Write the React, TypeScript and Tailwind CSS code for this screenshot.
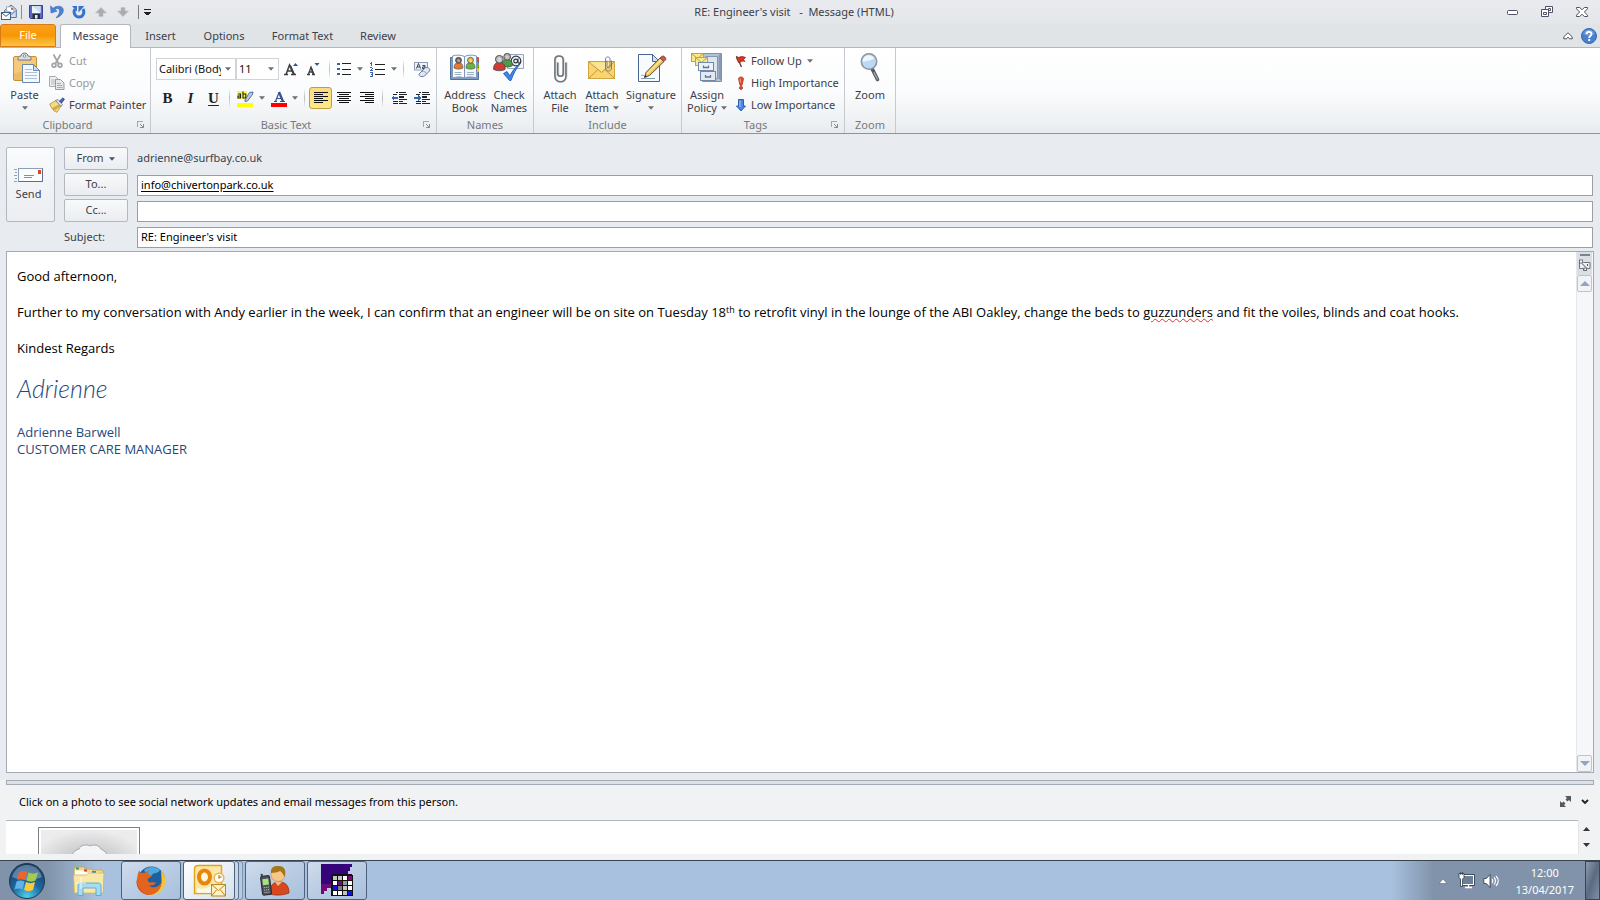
import React from "react";

type Kids = { children?: React.ReactNode };

/* ---------- small glyphs ---------- */

function Caret({ color = "#6b6f76" }: { color?: string }) {
  return (
    <svg width="6" height="4" viewBox="0 0 6 4" className="shrink-0" aria-hidden="true">
      <path d="M0 .3h6L3 3.700z" fill={color} />
    </svg>
  );
}

function Launcher({ label }: { label: string }) {
  return (
    <button type="button" aria-label={label} className="flex h-3 w-3 items-center justify-center">
      <svg width="8" height="8" viewBox="0 0 8 8" shapeRendering="crispEdges">
        <path d="M0 6V0h6v1H1v5z" fill="#a3a7ad" />
        <path d="M3 3h1v1h1v1h1V3h1v4H3V6h2V5H4V4H3z" fill="#8a8e94" />
      </svg>
    </button>
  );
}

function Sep() {
  return <span className="mx-1 h-5 w-px shrink-0 bg-gradient-to-b from-transparent via-[#b9bdc4] to-transparent" />;
}

/* ---------- title bar ---------- */

function EnvelopeLogo() {
  return (
    <svg width="17" height="17" viewBox="0 0 17 17">
      <path d="M4.500 6.500L11 1l5.300 4.500v8H4.500z" fill="#cfe0f2" stroke="#53779f" />
      <path d="M6.500 7V2.800h7.300V9z" fill="#fff" stroke="#7e9cbd" strokeWidth=".8" />
      <rect x="11" y="3.800" width="2" height="2" fill="#d9542c" />
      <path d="M5 7.500l5.500 3.800 5.500-4.800" fill="none" stroke="#6f93b8" />
      <rect x="1.500" y="8.500" width="9" height="7" fill="#f7fafd" stroke="#45617f" />
      <path d="M1.500 8.700L6 12.300l4.500-3.600" fill="none" stroke="#45617f" />
    </svg>
  );
}

function SaveIcon() {
  return (
    <svg width="14" height="14" viewBox="0 0 14 14">
      <path d="M.5.5h13v13h-12l-1-1z" fill="#5a68cf" stroke="#3641a0" />
      <rect x="3" y="1" width="8.500" height="7" fill="#eef4fd" />
      <path d="M3 1h8.500v7z" fill="#c9dcf5" />
      <rect x="3.500" y="9" width="7.500" height="5" fill="#2c3038" />
      <rect x="6" y="10" width="2.500" height="3.500" fill="#e9edf3" />
    </svg>
  );
}

function UndoIcon() {
  return (
    <svg width="14" height="14" viewBox="0 0 14 14">
      <path d="M.5 1l.6 7 6-2L5 5c1.500-2.600 4.800-2 4.600 1.500-.2 2.300-1.600 4.300-3.600 6.300 4-1 7.300-4 7.300-7.600C13.300.8 7 0 3 3.300z" fill="#4a83d8" stroke="#2f62b4" strokeWidth=".6" />
    </svg>
  );
}

function RedoIcon() {
  return (
    <svg width="14" height="14" viewBox="0 0 14 14">
      <path d="M2.800 4.200C1 7.500 3 12 7 12s6-4.500 4-8" fill="none" stroke="#3472d0" strokeWidth="3" />
      <path d="M0 1h5v5.500L3.500 5z" fill="#3472d0" />
      <path d="M6.500 7.500V1h5.800z" fill="#3472d0" />
    </svg>
  );
}

function NavArrow({ down = false }: { down?: boolean }) {
  return (
    <svg width="12" height="10" viewBox="0 0 12 10">
      <path d={down ? "M4 .5h4V4h3.500L6 9.500.5 4H4z" : "M4 9.500h4V6h3.500L6 .5.5 6H4z"} fill="#a9abaf" stroke="#bfc1c5" strokeWidth=".6" />
    </svg>
  );
}

function TitleBar() {
  return (
    <header className="flex h-6 items-center bg-gradient-to-b from-[#e9eaee] to-[#e4e7ea]">
      <div className="flex flex-1 items-center">
        <EnvelopeLogo />
        <span className="ml-1 mr-0.5 h-3.5 w-px bg-[#8b8e93]" />
        <button type="button" aria-label="Save" className="ml-0.5 flex w-5 justify-center"><SaveIcon /></button>
        <button type="button" aria-label="Undo" className="flex w-[22px] justify-center"><UndoIcon /></button>
        <button type="button" aria-label="Repeat" className="flex w-[22px] justify-center"><RedoIcon /></button>
        <button type="button" aria-label="Previous item" className="flex w-[22px] justify-center"><NavArrow /></button>
        <button type="button" aria-label="Next item" className="flex w-[22px] justify-center"><NavArrow down /></button>
        <span className="ml-1 mr-1 h-3.5 w-px bg-[#77797d]" />
        <button type="button" aria-label="Customize toolbar" className="flex w-2 justify-center">
          <svg width="7" height="6" viewBox="0 0 7 6" shapeRendering="crispEdges">
            <path d="M0 0h7v1H0zM0 3h7v1H6v1H5v1H2V5H1V4H0z" fill="#222" />
          </svg>
        </button>
      </div>
      <h1 className="whitespace-pre text-[11px] leading-4 text-[#3c4048]">{"RE: Engineer's visit   -  Message (HTML)"}</h1>
      <div className="flex flex-1 items-center justify-end gap-[22px] pr-3">
        <button type="button" aria-label="Minimize">
          <svg width="12" height="12" viewBox="0 0 12 12"><rect x=".5" y="4.500" width="10" height="4" rx="1" fill="#fff" stroke="#4e5166" /></svg>
        </button>
        <button type="button" aria-label="Restore">
          <svg width="13" height="12" viewBox="0 0 13 12">
            <path d="M4.500.5h7v6h-7z" fill="#fff" stroke="#4e5166" />
            <path d="M7.500 2.500h2v2h-2z" fill="none" stroke="#4e5166" />
            <path d="M.5 3.500h7v7h-7z" fill="#fff" stroke="#4e5166" />
            <path d="M2.500 6.500h3v2h-3z" fill="none" stroke="#4e5166" />
          </svg>
        </button>
        <button type="button" aria-label="Close">
          <svg width="12" height="10" viewBox="0 0 12 10">
            <path d="M.5.5h3.200L6 2.800 8.300.5h3.200v1.300L8.300 5l3.200 3.200v1.300H8.300L6 7.200 3.700 9.500H.5V8.200L3.700 5 .5 1.800z" fill="#fff" stroke="#4e5166" />
          </svg>
        </button>
      </div>
    </header>
  );
}

function TabStrip() {
  const tab = "flex h-6 items-center justify-center";
  return (
    <nav className="flex h-6 items-stretch border-b border-[#b3b7bd] bg-[#e0e4e7] text-[11px] text-[#3c4048]">
      <button type="button" className="flex w-14 items-center justify-center rounded-t-[3px] border border-[#d97a17] bg-gradient-to-b from-[#f9a01c] via-[#f79700] to-[#fdc63f] text-white">File</button>
      <button type="button" className={tab + " relative ml-1 w-[71px] rounded-t-[3px] border border-b-0 border-[#b3b7bd] bg-white"}>Message</button>
      <button type="button" className={tab + " w-[59px]"}>Insert</button>
      <button type="button" className={tab + " w-[68px]"}>Options</button>
      <button type="button" className={tab + " w-[89px]"}>Format Text</button>
      <button type="button" className={tab + " w-[62px]"}>Review</button>
      <div className="flex flex-1 items-center justify-end gap-2 pr-[3px]">
        <button type="button" aria-label="Collapse the ribbon">
          <svg width="10" height="8" viewBox="0 0 10 8">
            <path d="M5 .8l4.200 4v2H6.700L5 5.200 3.300 6.800H.8v-2z" fill="#fff" stroke="#4e5166" />
          </svg>
        </button>
        <button type="button" aria-label="Help">
          <svg width="16" height="16" viewBox="0 0 16 16">
            <circle cx="8" cy="8" r="7.500" fill="#4a80d0" stroke="#3566b0" />
            <path d="M2 6a6.300 6.300 0 0 1 12 0c-4 2-8 2-12 0z" fill="#7ba5e2" opacity=".6" />
            <path d="M5.500 6.300C5.500 2.800 10.500 3 10.500 6c0 1.800-2.300 1.800-2.300 3.900" fill="none" stroke="#fff" strokeWidth="1.900" />
            <rect x="7.200" y="11" width="2" height="2" fill="#fff" />
          </svg>
        </button>
      </div>
    </nav>
  );
}

/* ---------- ribbon icons ---------- */

function PasteIcon() {
  return (
    <svg width="32" height="32" viewBox="0 0 32 32">
      <rect x="4.500" y="4.500" width="23" height="24" rx="1.500" fill="#eebb62" stroke="#c98f35" />
      <path d="M5 5h22v8L5 22z" fill="#f6cf86" opacity=".7" />
      <path d="M9 6.500c0-1.500 1-2.500 3-2.500 0-1.500 1-3 3.500-3S19 2.500 19 4c2 0 3 1 3 2.500V8H9z" fill="#d8dde3" stroke="#6f7884" />
      <circle cx="15.500" cy="4" r="1.300" fill="#fff" stroke="#6f7884" strokeWidth=".8" />
      <path d="M13.500 12.500h11l6 6v12h-17z" fill="#f5f9fe" stroke="#6b87b3" />
      <path d="M24.500 12.500v6h6z" fill="#cfdff2" stroke="#6b87b3" />
      <path d="M16 17.500h7M16 20.500h12M16 23.500h12M16 26.500h12" stroke="#a9bfdc" />
    </svg>
  );
}

function CutIcon() {
  return (
    <svg width="16" height="16" viewBox="0 0 16 16" fill="none" stroke="#a0a3a7" strokeWidth="1.700">
      <path d="M4.500 1.500l5 9M11.500 1.500l-5 9" />
      <circle cx="5" cy="12.300" r="1.900" />
      <circle cx="11" cy="12.300" r="1.900" />
    </svg>
  );
}

function CopyIcon() {
  return (
    <svg width="16" height="16" viewBox="0 0 16 16">
      <path d="M.5 1.500h6l3 3v7h-9z" fill="#f0f0f1" stroke="#a7a9ac" />
      <path d="M2 5h5M2 7h4M2 9h4" stroke="#b5b7ba" />
      <path d="M6.500 4.500h5l3.500 3.500v6.500H6.500z" fill="#e6e7e8" stroke="#999ca0" />
      <path d="M8 8.500h4M8 10.500h5.500M8 12.500h5.500" stroke="#aaacaf" />
    </svg>
  );
}

function PainterIcon() {
  return (
    <svg width="16" height="16" viewBox="0 0 16 16">
      <path d="M.8 7L7 3.500l5 5.500-4 6.300C4.500 14 2 11 .8 7z" fill="#f2dd84" stroke="#b8922e" strokeWidth=".8" />
      <path d="M5 14l7-5-1-2-8 4z" fill="#b98b2d" opacity=".6" />
      <path d="M6.500 3.500L9 2.500l4.500 5-1.500 2z" fill="#dfe3ea" stroke="#6c7380" strokeWidth=".8" />
      <path d="M10.500 4L14 .8l1.500 1.500L12.500 6z" fill="#4766b4" stroke="#2c4486" strokeWidth=".8" />
    </svg>
  );
}

function GrowFont({ shrink = false }: { shrink?: boolean }) {
  return (
    <svg width="18" height="18" viewBox="0 0 18 18">
      {shrink ? (
        <>
          <path d="M2 14.500h3M7 14.500h3M3.300 14.500L6 7l3 7.500M4.300 12h3.500" fill="none" stroke="#3c3f44" strokeWidth="1.300" />
          <path d="M6 7.500l2.500 7" stroke="#3c3f44" strokeWidth="1.600" />
          <path d="M9.500 3h5L12 6z" fill="#2f5496" />
        </>
      ) : (
        <>
          <path d="M2 14.500h4M9 14.500h5M4 14.500L7.500 5l4.500 9.500M5 11h5.500" fill="none" stroke="#3c3f44" strokeWidth="1.500" />
          <path d="M8 5.500l4 9" stroke="#3c3f44" strokeWidth="2" />
          <path d="M11 6h5l-2.500-3z" fill="#2f5496" />
        </>
      )}
    </svg>
  );
}

function BulletsIcon() {
  return (
    <svg width="14" height="14" viewBox="0 0 14 14" shapeRendering="crispEdges">
      <path d="M0 1h3v2H0zM0 6h3v2H0zM0 11h3v2H0z" fill="#3c62a8" />
      <path d="M5 1h9v1H5zM5 7h9v1H5zM5 12h9v1H5z" fill="#222" />
    </svg>
  );
}

function NumbersIcon() {
  return (
    <svg width="15" height="15" viewBox="0 0 15 15" shapeRendering="crispEdges">
      <path d="M1 0h1v4H1zM0 1h1v1H0zM0 5h2v1h1v1H2v1h1v1H0V8h1V7h1V6H0zM0 10h3v5H0v-1h2v-1H1v-1h1v-1H0z" fill="#3c62a8" />
      <path d="M5 2h10v1H5zM5 7h10v1H5zM5 12h10v1H5z" fill="#222" />
    </svg>
  );
}

function ClearFormatIcon() {
  return (
    <svg width="17" height="17" viewBox="0 0 17 17">
      <rect x=".5" y="1.500" width="13" height="7.500" fill="#eef3fa" stroke="#8f9bb0" />
      <path d="M2.500 7.500l2-5 2 5M3.200 6h2.600M8.500 4.500h2.500v3H8.500V6H11" fill="none" stroke="#38425a" />
      <path d="M5 13l6-6c2-1.500 6 .5 4.500 3L10.500 15c-2 1.500-6.500 0-5.500-2z" fill="#dfe7f2" stroke="#6b7f9f" />
      <path d="M8 10.500c2-.5 4 .5 4.500 2.500" fill="none" stroke="#8da0bd" />
    </svg>
  );
}

function HighlightIcon() {
  return (
    <svg width="17" height="17" viewBox="0 0 17 17">
      <rect x="0" y="1" width="10" height="8" fill="#fbf34e" />
      <path d="M1 4h2.500v4H1V6h2.500M6 1.500V8h2.800V4H6" fill="none" stroke="#222" strokeWidth="1.100" />
      <path d="M8 10l4.500-7.500L16 2l-.5 2.500L10.500 11 8 11.500z" fill="#b8cbe6" stroke="#44618f" strokeWidth=".9" />
      <rect x="0" y="13" width="16" height="4" fill="#ffff00" />
    </svg>
  );
}

function FontColorIcon() {
  return (
    <svg width="16" height="17" viewBox="0 0 16 17">
      <path d="M3 11.500h3M9 11.500h5M4.500 11.500L8 2.500M5.500 8.500H10" fill="none" stroke="#33548f" strokeWidth="1.200" />
      <path d="M8 2l4 9.500" stroke="#33548f" strokeWidth="2.300" />
      <rect x="0" y="13" width="16" height="4" fill="#ff0000" />
    </svg>
  );
}

function AlignIcon({ kind }: { kind: "left" | "center" | "right" }) {
  return (
    <svg width="14" height="12" viewBox="0 0 14 12" shapeRendering="crispEdges">
      {[14, 9, 14, 9, 14, 9].map((w, i) => (
        <rect key={i} x={kind === "left" ? 0 : kind === "right" ? 14 - w : w === 9 ? 2 : 0} y={i * 2} width={kind === "center" && w === 9 ? 10 : w} height="1" fill="#111" />
      ))}
    </svg>
  );
}

function IndentIcon({ out = false }: { out?: boolean }) {
  return (
    <svg width="16" height="13" viewBox="0 0 16 13" shapeRendering="crispEdges">
      <path d="M5 0h2v1H5zM8 0h7v1H8zM8 2h8v1H8zM8 4h5v2H8zM8 7h8v1H8zM8 9h4v1H8zM2 11h5v1H2zM8 11h8v1H8zM2 2h4v1H2zM2 9h5v1H2z" fill="#222" />
      <path d={out ? "M0 6l3-3v2h4v2H3v2z" : "M7 6L4 3v2H0v2h4v2z"} fill="#3467b8" />
    </svg>
  );
}

function Bust({ x, y, head, body, size = 1 }: { x: number; y: number; head: string; body: string; size?: number }) {
  return (
    <g transform={`translate(${x} ${y}) scale(${size})`}>
      <path d="M0 11c0-4 2-5.500 4.500-5.500S9 7 9 11c-2 1.500-7 1.500-9 0z" fill={body} stroke="#44484c" strokeWidth=".6" />
      <circle cx="4.500" cy="3.300" r="3" fill={head} stroke="#44484c" strokeWidth=".7" />
      <path d="M3 3c.5-1.500 2-1.500 3 0v2H3.500z" fill="#fff" opacity=".45" />
    </g>
  );
}

function AddressBookIcon() {
  return (
    <svg width="32" height="32" viewBox="0 0 32 32">
      <path d="M1.500 5.500h28v22h-28z" fill="#7f9cc4" stroke="#4f6f9f" />
      <path d="M3.500 4c4-1.500 9-1 12 .5V26c-3-1.500-8-1.500-12 0z" fill="#fdfefe" stroke="#7f96b5" />
      <path d="M27.500 4c-4-1.500-9-1-12 .5V26c3-1.500 8-1.500 12 0z" fill="#f2f6fb" stroke="#7f96b5" />
      <Bust x={5} y={5} head="#6a605a" body="#e07a33" />
      <Bust x={17} y={5} head="#d8b93c" body="#6fb13f" />
      <path d="M5.500 20.500h7M5.500 22.500h7M18 20.500h7M18 22.500h7" stroke="#9fb0c6" />
      <path d="M28 6h2v4h-2z" fill="#d94b36" />
      <path d="M28 11h2v4h-2z" fill="#6fb13f" />
      <path d="M28 16h2v4h-2z" fill="#e6c23c" />
    </svg>
  );
}

function CheckNamesIcon() {
  return (
    <svg width="32" height="32" viewBox="0 0 32 32">
      <path d="M14.500 2.500h16v14h-16z" fill="#f1f4f9" stroke="#94a5bd" />
      <circle cx="23" cy="9" r="4.800" fill="none" stroke="#33383f" strokeWidth="1.200" />
      <circle cx="22.700" cy="9" r="1.900" fill="none" stroke="#33383f" strokeWidth="1.200" />
      <path d="M25 6.500v4c1 1.500 2.500 0 2.700-1.500" fill="none" stroke="#33383f" strokeWidth="1.100" />
      <Bust x={9} y={1} head="#a9a5a2" body="#49a044" size={1.15} />
      <Bust x={0.5} y={3} head="#b9b5b2" body="#cf3a35" size={1.3} />
      <path d="M10.500 21.500l3.500-2 3 4.500c2-5 5-8.500 9.500-11.500-3.500 4.500-6 9-8.500 16h-1.500z" fill="#3f86e8" stroke="#2560b8" strokeWidth=".9" />
    </svg>
  );
}

function ClipPath({ color = "#6d7378" }: { color?: string }) {
  return <path d="M12 9v12c0 4 6 4 6 0V6c0-5.500-9-5.500-9 0v18c0 8 12 8 12 0V9" fill="none" stroke={color} strokeWidth="1.700" />;
}

function AttachFileIcon() {
  return (
    <svg width="32" height="32" viewBox="0 0 32 32">
      <g transform="translate(3.400 2.200) scale(.92)"><ClipPath color="#cfd4d8" /></g>
      <g transform="translate(2.600 2.200) scale(.92)"><ClipPath /></g>
    </svg>
  );
}

function AttachItemIcon() {
  return (
    <svg width="32" height="32" viewBox="0 0 32 32">
      <rect x="2.500" y="9.500" width="26" height="17" fill="#f9d570" stroke="#d0a544" />
      <path d="M3 26l9-8.500M28 26l-9-8.500M3 10l12.500 10.500L28 10" fill="none" stroke="#c39837" />
      <path d="M4 10.500h23L15.500 19z" fill="#fdeaa6" opacity=".7" />
      <g transform="translate(15 4) scale(.5)"><ClipPath color="#5d6f93" /></g>
    </svg>
  );
}

function SignatureIcon() {
  return (
    <svg width="32" height="32" viewBox="0 0 32 32">
      <path d="M3.500 2.500h14l7 7v20h-21z" fill="#f7fafe" stroke="#4a6494" />
      <path d="M17.500 2.500v7h7z" fill="#d3e0f1" stroke="#4a6494" />
      <path d="M6 24c2-3 3 2 5 0M6 26.500h14" fill="none" stroke="#8498bb" />
      <path d="M9.500 25.500l1.500-5L25 6l4 3.500L14.500 23.500z" fill="#f0c457" stroke="#5c5030" />
      <path d="M12 22L26.500 7.500" stroke="#fbe7a8" strokeWidth="1.500" />
      <path d="M25 6l4 3.500 1.800-2c.7-1.500-2-4-3.600-3.400z" fill="#d4574e" stroke="#7b3d3a" strokeWidth=".8" />
      <path d="M9.500 25.500l.8-2.500 1.600 1.600z" fill="#222" />
    </svg>
  );
}

function PolicyIcon() {
  return (
    <svg width="32" height="32" viewBox="0 0 32 32">
      <path d="M11.500 1.500h19v28h-19z" fill="#b4c2d5" stroke="#7d90ac" />
      <path d="M27.500 3.500l2.500-2v27l-2.500-2z" fill="#8799b5" />
      <path d="M14.500 4.500h12v22h-12z" fill="#dce5f0" stroke="#8497b3" />
      <rect x=".5" y="1.500" width="12" height="8" fill="#fae88c" stroke="#c3a23f" />
      <path d="M.5 1.500l6 5 6-5" fill="none" stroke="#c3a23f" />
      <rect x="4.500" y="5.500" width="12" height="8" fill="#fae88c" stroke="#c3a23f" />
      <path d="M4.500 5.500l6 5 6-5" fill="none" stroke="#c3a23f" />
      <rect x="7.500" y="10.500" width="15" height="8" fill="#edf2f8" stroke="#7288a8" />
      <rect x="9.500" y="19.500" width="15" height="9" fill="#e3eaf4" stroke="#7288a8" />
      <path d="M12.500 13.500v2h5v-2M14.500 23v2h5v-2" fill="none" stroke="#5f7696" strokeWidth="1.300" />
    </svg>
  );
}

function FlagIcon() {
  return (
    <svg width="12" height="14" viewBox="0 0 12 14">
      <path d="M1.500 2l5 11" stroke="#4b3a38" strokeWidth="1.300" />
      <path d="M1.200 3.500C4 4.500 5 1 10.500 3.500L8.500 5.500l1.500 2C6.500 6 6 9 3.500 8.500z" fill="#d8361f" stroke="#8e2014" strokeWidth=".7" />
    </svg>
  );
}

function HighIcon() {
  return (
    <svg width="12" height="14" viewBox="0 0 12 14">
      <path d="M3.500 3C3.500.2 8.500.2 8.500 3L7 9.300H5z" fill="#e04a2c" stroke="#a92b17" strokeWidth=".7" />
      <path d="M5 2.500l.5 4" stroke="#f7a08c" />
      <circle cx="6" cy="11.800" r="1.600" fill="#e04a2c" stroke="#a92b17" strokeWidth=".7" />
    </svg>
  );
}

function LowIcon() {
  return (
    <svg width="12" height="14" viewBox="0 0 12 14">
      <path d="M3.500 1.500h5V8h2l-4.500 5L1.500 8h2z" fill="#4b86e6" stroke="#2552a5" strokeWidth=".9" />
      <path d="M5 2.500V9" stroke="#a7c8fa" />
    </svg>
  );
}

function ZoomIcon() {
  return (
    <svg width="32" height="32" viewBox="0 0 32 32">
      <path d="M18.500 17.500l5 10" stroke="#55585d" strokeWidth="3.600" strokeLinecap="round" />
      <path d="M20 20.500l3.300 6.500" stroke="#a4a8ae" strokeWidth="1.400" strokeLinecap="round" />
      <circle cx="15" cy="9.500" r="7.700" fill="#bcd8f5" stroke="#8b949f" strokeWidth="1.500" />
      <path d="M9 10a6 6 0 0 1 11-4c-2 3-6 2-11 4z" fill="#eef6fe" />
    </svg>
  );
}

/* ---------- ribbon ---------- */

function Group({ label, launcher = false, width, children }: Kids & { label: string; launcher?: boolean; width: string }) {
  return (
    <section aria-label={label} className={"flex shrink-0 flex-col border-r border-[#c6cad0] " + width}>
      <div className="h-[69px] pt-0.5">{children}</div>
      <div className="flex h-4 items-center pr-[3px]">
        <span className={(launcher ? "" : "pl-[3px] ") + "flex-1 text-center text-[11px] leading-4 text-[#75797f]"}>{label}</span>
        {launcher && <Launcher label={label + " settings"} />}
      </div>
    </section>
  );
}

function Big({ icon, lines, caret, width }: { icon: React.ReactNode; lines: string[]; caret?: "inline" | "below"; width: string }) {
  return (
    <button type="button" className={"flex h-[66px] shrink-0 flex-col items-center pt-0.5 text-[11px] leading-[13px] text-[#3c4048] " + width}>
      {icon}
      <span className="mt-1">{lines[0]}</span>
      {lines[1] && (
        <span className="flex items-center gap-1">
          {lines[1]}
          {caret === "inline" && <Caret />}
        </span>
      )}
      {caret === "below" && <span className="mt-[5px]"><Caret /></span>}
    </button>
  );
}

function Small({ icon, text, caret = false, disabled = false }: { icon: React.ReactNode; text: string; caret?: boolean; disabled?: boolean }) {
  return (
    <button type="button" disabled={disabled} className={"flex h-[22px] items-center whitespace-nowrap text-[11px] " + (disabled ? "text-[#98999b]" : "text-[#3c4048]")}>
      {icon}
      <span className="ml-1">{text}</span>
      {caret && <span className="ml-[5px]"><Caret /></span>}
    </button>
  );
}

function Tool({ label, width = "w-[23px]", on = false, children }: Kids & { label: string; width?: string; on?: boolean }) {
  return (
    <button
      type="button"
      aria-label={label}
      className={"flex h-[22px] shrink-0 items-center justify-center " + width + (on ? " rounded-[3px] border border-[#c29b47] bg-gradient-to-b from-[#fbdb83] to-[#ffe984]" : "")}
    >
      {children}
    </button>
  );
}

function Combo({ label, value, width }: { label: string; value: string; width: string }) {
  return (
    <label className={"grid h-[22px] shrink-0 items-center border border-[#d0d4d9] bg-white " + width}>
      <span className="sr-only">{label}</span>
      <select defaultValue={value} className="col-start-1 row-start-1 mr-3.5 h-5 min-w-0 appearance-none overflow-hidden bg-transparent pl-[2px] text-[11px] text-[#111] outline-none">
        <option>{value}</option>
      </select>
      <span className="pointer-events-none col-start-1 row-start-1 mr-1 flex justify-self-end"><Caret /></span>
    </label>
  );
}

function Ribbon() {
  return (
    <div className="flex h-[86px] border-b border-[#8f949b] bg-gradient-to-b from-white via-[#fbfcfd] to-[#e9ecef]">
      <Group label="Clipboard" launcher width="w-[151px]">
        <div className="flex">
          <Big icon={<PasteIcon />} lines={["Paste"]} caret="below" width="w-[49px]" />
          <div className="flex flex-col">
            <Small icon={<CutIcon />} text="Cut" disabled />
            <Small icon={<CopyIcon />} text="Copy" disabled />
            <Small icon={<PainterIcon />} text="Format Painter" />
          </div>
        </div>
      </Group>

      <Group label="Basic Text" launcher width="w-[286px]">
        <div className="flex flex-col gap-[7px] pl-[5px] pt-2">
          <div className="flex items-center">
            <Combo label="Font" value="Calibri (Body)" width="w-20" />
            <Combo label="Font size" value="11" width="w-[43px]" />
            <Tool label="Grow font" width="w-6"><GrowFont /></Tool>
            <Tool label="Shrink font" width="w-[22px]"><GrowFont shrink /></Tool>
            <Sep />
            <Tool label="Bullets" width="w-5"><BulletsIcon /></Tool>
            <Tool label="Bullet options" width="w-3"><Caret /></Tool>
            <Tool label="Numbering"><NumbersIcon /></Tool>
            <Tool label="Numbering options" width="w-2.5"><Caret /></Tool>
            <Sep />
            <Tool label="Clear formatting" width="w-7"><ClearFormatIcon /></Tool>
          </div>
          <div className="flex items-center font-['Liberation_Serif',serif] text-[15px] text-[#222]">
            <Tool label="Bold"><b>B</b></Tool>
            <Tool label="Italic"><i className="font-bold">I</i></Tool>
            <Tool label="Underline"><span className="font-bold underline underline-offset-2">U</span></Tool>
            <Sep />
            <Tool label="Highlight"><HighlightIcon /></Tool>
            <Tool label="Highlight options" width="w-2.5"><Caret /></Tool>
            <Tool label="Font color"><FontColorIcon /></Tool>
            <Tool label="Font color options" width="w-2.5"><Caret /></Tool>
            <Sep />
            <Tool label="Align left" on><AlignIcon kind="left" /></Tool>
            <Tool label="Center"><AlignIcon kind="center" /></Tool>
            <Tool label="Align right"><AlignIcon kind="right" /></Tool>
            <Sep />
            <Tool label="Decrease indent"><IndentIcon out /></Tool>
            <Tool label="Increase indent"><IndentIcon /></Tool>
          </div>
        </div>
      </Group>

      <Group label="Names" width="w-[97px]">
        <div className="flex pl-[5px]">
          <Big icon={<AddressBookIcon />} lines={["Address", "Book"]} width="w-[46px]" />
          <Big icon={<CheckNamesIcon />} lines={["Check", "Names"]} width="w-[42px]" />
        </div>
      </Group>

      <Group label="Include" width="w-[148px]">
        <div className="flex pl-[5px]">
          <Big icon={<AttachFileIcon />} lines={["Attach", "File"]} width="w-[42px]" />
          <Big icon={<AttachItemIcon />} lines={["Attach", "Item"]} caret="inline" width="w-[42px]" />
          <Big icon={<SignatureIcon />} lines={["Signature"]} caret="below" width="w-[56px]" />
        </div>
      </Group>

      <Group label="Tags" launcher width="w-[163px]">
        <div className="flex pl-1">
          <Big icon={<PolicyIcon />} lines={["Assign", "Policy"]} caret="inline" width="w-[42px]" />
          <div className="flex flex-col pl-[7px]">
            <Small icon={<FlagIcon />} text="Follow Up" caret />
            <Small icon={<HighIcon />} text="High Importance" />
            <Small icon={<LowIcon />} text="Low Importance" />
          </div>
        </div>
      </Group>

      <Group label="Zoom" width="w-[51px]">
        <div className="flex justify-center">
          <Big icon={<ZoomIcon />} lines={["Zoom"]} width="w-11" />
        </div>
      </Group>
    </div>
  );
}

/* ---------- message header ---------- */

const headerButton =
  "flex h-[23px] items-center justify-center gap-1.5 rounded-[2px] border border-[#b4b8be] bg-gradient-to-b from-[#f8f9fb] to-[#eaedf0] text-[11px] text-[#3c4048]";
const headerInput = "h-[21px] w-full border border-[#9a9ea5] bg-white px-[3px] pb-0.5 text-[11px] text-black outline-none";

function SendIcon() {
  return (
    <svg width="30" height="15" viewBox="0 0 30 15">
      <path d="M0 1.500h3M1 4.500h2M0 7.500h3M1 10.500h2M0 13.500h3" stroke="#8f9fb9" />
      <rect x="4.500" y=".5" width="24" height="13" fill="#fbfcfe" stroke="#8f9fb9" />
      <path d="M4.500 13.500h24V.5" fill="none" stroke="#5d6f8e" />
      <rect x="24" y="2" width="3" height="4" fill="#d9432c" />
      <path d="M10 7.500h10M10 9.500h8" stroke="#7c90b3" />
    </svg>
  );
}

function MessageHeader() {
  return (
    <form className="grid grid-cols-[49px_64px_1fr] gap-x-[9px] gap-y-[3px] pl-1.5 pr-[7px] pt-[13px]" onSubmit={(e) => e.preventDefault()}>
      <button type="submit" className="row-span-3 flex flex-col items-center justify-center gap-1 rounded-[2px] border border-[#b4b8be] bg-gradient-to-b from-[#fafbfc] via-[#f2f3f7] to-[#eceef1] pr-1 text-[11px] leading-[14px] text-[#3c4048]">
        <SendIcon />
        Send
      </button>
      <button type="button" className={headerButton}>From <Caret color="#44546f" /></button>
      <span className="pt-[3px] text-[11px] leading-4 text-[#3c4048]">adrienne@surfbay.co.uk</span>
      <button type="button" className={headerButton}>To...</button>
      <input aria-label="To" defaultValue="info@chivertonpark.co.uk" spellCheck={false} className={headerInput + " mt-0.5 underline underline-offset-2"} />
      <button type="button" className={headerButton}>Cc...</button>
      <input aria-label="Cc" className={headerInput + " mt-0.5"} />
      <label htmlFor="subject" className="col-start-2 self-center text-[11px] leading-4 text-[#3c4048]">Subject:</label>
      <input id="subject" defaultValue="RE: Engineer's visit" spellCheck={false} className={headerInput + " mt-0.5"} />
    </form>
  );
}

/* ---------- message body ---------- */

function ScrollButton({ down = false }: { down?: boolean }) {
  return (
    <button type="button" aria-label={down ? "Scroll down" : "Scroll up"} className="flex h-[17px] w-[15px] items-center justify-center rounded-[2px] border border-[#c0c4ca] bg-[#f1f3f5]">
      <svg width="10" height="5" viewBox="0 0 10 5"><path d={down ? "M0 0h10L5 5z" : "M0 5h10L5 0z"} fill="#91a3c9" /></svg>
    </button>
  );
}

function Editor() {
  return (
    <main className="mx-1.5 mt-[3px] flex min-h-0 flex-1 border border-[#a3abb7] bg-white">
      <div
        role="textbox"
        aria-label="Message body"
        aria-multiline="true"
        contentEditable
        suppressContentEditableWarning
        spellCheck={false}
        className="min-w-0 flex-1 px-2.5 pt-[15px] font-['Open_Sans','Noto_Sans',sans-serif] text-[13px] leading-[18px] text-black outline-none"
      >
        <p>Good afternoon,</p>
        <p className="mt-[18px]">
          Further to my conversation with Andy earlier in the week, I can confirm that an engineer will be on site on Tuesday 18
          <sup className="text-[9px] leading-none">th</sup> to retrofit vinyl in the lounge of the ABI Oakley, change the beds to{" "}
          <span className="underline decoration-[#e03030] decoration-wavy decoration-1 underline-offset-1">guzzunders</span> and fit the voiles, blinds and coat hooks.
        </p>
        <p className="mt-[18px]">Kindest Regards</p>
        <p className="mt-4 font-['Lato'] text-[25px] font-light italic leading-[30px] text-[#1f497d]">Adrienne</p>
        <p className="mt-[21px] leading-[17px] text-[#1f497d]">Adrienne Barwell</p>
        <p className="leading-[17px] text-[#1f497d]">CUSTOMER CARE MANAGER</p>
      </div>
      <div className="flex w-[17px] shrink-0 flex-col items-center border-l border-[#e6e8eb] bg-[#f6f7f8] pr-px">
        <div className="flex h-[23px] w-full flex-col items-center gap-[3px] bg-[#d9dfe7] pt-0.5">
          <span className="h-0.5 w-2.5 bg-[#7e838a]" />
          <svg width="13" height="13" viewBox="0 0 13 13">
            <path d="M1.500 2.500h3l1 1h6.500v6H8.500v2h-3v-2h-4z" fill="#f7eef0" stroke="#6f757d" />
            <path d="M4 4.500l4 4M9.500 5v2" stroke="#4c5057" />
            <rect x="1.500" y="1" width="3" height="3" fill="#fff" stroke="#555a61" strokeWidth=".8" />
            <rect x="6" y="9" width="2.500" height="2.500" fill="#fff" stroke="#555a61" strokeWidth=".8" />
          </svg>
        </div>
        <ScrollButton />
        <div className="flex-1" />
        <ScrollButton down />
      </div>
    </main>
  );
}

/* ---------- people pane ---------- */

function PeoplePane() {
  return (
    <section aria-label="People" className="bg-[#f1f2f4]">
      <div className="mx-1.5 h-[5px] border border-[#a3abb7] bg-[#dde1e7]" />
      <div className="flex h-[35px] items-center pb-0.5 pl-[19px] pr-[11px] text-[11px] leading-4 text-black">
        <p className="flex-1">Click on a photo to see social network updates and email messages from this person.</p>
        <button type="button" aria-label="Expand pane" className="mr-2.5">
          <svg width="11" height="11" viewBox="0 0 11 11"><path d="M5 0h6v6L9 4 7.500 5.500l-2-2L7 2zM6 11H0V5l2 2 1.500-1.500 2 2L4 9z" fill="#55585c" /></svg>
        </button>
        <button type="button" aria-label="Collapse pane">
          <svg width="8" height="6" viewBox="0 0 8 6"><path d="M1 1l3 3 3-3" fill="none" stroke="#222" strokeWidth="1.900" /></svg>
        </button>
      </div>
      <div className="mx-1.5 mb-1.5 flex h-[34px] overflow-hidden">
        <div className="flex-1 border-t border-[#b3b7bd] bg-white pl-8 pt-1.5">
          <div className="h-[60px] w-[102px] border border-[#7d8187] bg-white p-0.5">
            <svg width="96" height="56" viewBox="0 0 96 56" role="img" aria-label="Contact photo">
              <defs>
                <radialGradient id="photo" cx=".5" cy=".6" r=".6">
                  <stop offset="0" stopColor="#b4b5b7" />
                  <stop offset="1" stopColor="#ececed" />
                </radialGradient>
              </defs>
              <rect width="96" height="56" fill="url(#photo)" />
              <path d="M30 30c0-6 4-10 8-11 1-4 8-5 11-3 4-2 9-1 11 3 4 2 8 6 8 12v25H30z" fill="#f5f5f6" stroke="#a4a6a9" />
            </svg>
          </div>
        </div>
        <div className="flex w-4 flex-col items-center justify-between border-l border-[#e3e5e7] bg-[#f1f2f3] py-[7px]">
          <svg width="7" height="4" viewBox="0 0 7 4"><path d="M0 4h7L3.500 0z" fill="#33363a" /></svg>
          <svg width="7" height="4" viewBox="0 0 7 4"><path d="M0 0h7L3.500 4z" fill="#33363a" /></svg>
        </div>
      </div>
    </section>
  );
}

/* ---------- taskbar ---------- */

function StartOrb() {
  return (
    <svg width="38" height="38" viewBox="0 0 38 38">
      <defs>
        <radialGradient id="orb" cx=".5" cy=".95" r=".95">
          <stop offset="0" stopColor="#4fd0f0" />
          <stop offset=".45" stopColor="#1d6aa2" />
          <stop offset="1" stopColor="#18365a" />
        </radialGradient>
      </defs>
      <circle cx="19" cy="19" r="17.500" fill="url(#orb)" stroke="#20384f" />
      <path d="M4 15C7 5 14 3 19 3s12 2 15 12c-9 4-20 4-30 0z" fill="#a9c6dd" opacity=".45" />
      <path d="M11 10c2.500-1.500 5-1.500 8 0l-2 8c-2.500-1.500-5-1.500-8 0z" fill="#ee6330" />
      <path d="M20.500 10.500c2.500 1.500 6 1.500 9.500 0l-2.500 8c-3 1.500-6 1.500-9 0z" fill="#a5cc4b" />
      <path d="M8.500 19.500c2.500-1.500 5-1.500 8 0l-2 8c-2.500-1.500-5-1.500-8 0z" fill="#5fb3ea" />
      <path d="M18 20c2.500 1.500 6 1.500 9 0l-2 8c-3 1.500-6 1.500-9 0z" fill="#fbc93c" />
    </svg>
  );
}

function FolderIcon() {
  return (
    <svg width="34" height="32" viewBox="0 0 34 32">
      <path d="M2 6V3.500L4 2h8l1 2h6l1 1h10l1.500 2v20H2z" fill="#f0d98a" stroke="#c5a44f" strokeWidth=".8" />
      <path d="M3 5.500h9l1.500 2h14V10H3z" fill="#fff" />
      <rect x="4" y="2.500" width="3" height="2" fill="#32a243" />
      <rect x="12" y="4.500" width="3" height="2" fill="#d5442e" />
      <rect x="20" y="6" width="4" height="2" fill="#3c8bd8" />
      <path d="M1.500 10h13l2-2h15.500l-.8 20H2.500z" fill="#f8e9a9" stroke="#d2b561" strokeWidth=".8" />
      <path d="M6 30.500V21c0-2 1-3 3-3h17c2 0 3 1 3 3v9.500h-5V23H11v7.500z" fill="#a5dbf3" stroke="#5aa7cf" strokeWidth=".9" />
      <path d="M9 12v12M4 18h10" stroke="#fff" opacity=".8" />
    </svg>
  );
}

function FirefoxIcon() {
  return (
    <svg width="32" height="32" viewBox="0 0 32 32">
      <circle cx="16.500" cy="15" r="13.500" fill="#1d5f9f" />
      <path d="M9 5c4-4 12-4 16 0-2 4-6 2-8 5s-5 1-8-5z" fill="#4fa8dc" />
      <path d="M26 5c6 7 6 16-1 21.500-3 2.500-7 4-11 3.500 8-1.500 12-6 12.500-13 .2-3.500-.3-8-.5-12z" fill="#fbc32e" />
      <path d="M2.500 11c.3-2.500 1-4.500 2-6 0 1.500.4 2.500 1.200 3.200C7 7.500 9 7.500 10.500 8c.5-1.500 2-2.500 3.500-3-1 1.500-1.200 3-.5 4.200 1 .8 2.500.8 3.200 1.300-.2 2-3.200 2-4 4 0 1.500 1 3 3 3 3-.5 4 .5 5.500-.3-1 2.500-4.200 4-7.500 3 4 3.800 10.500 2.500 12.800-3.200C26 24 21 30 14 30 6 30 0 22 2.500 11z" fill="#e2641f" />
      <path d="M2.500 11C.5 20 5 28 14 30 7 29 1.500 24 1.500 17z" fill="#c5401a" />
    </svg>
  );
}

function OutlookIcon() {
  return (
    <svg width="33" height="33" viewBox="0 0 33 33">
      <path d="M1.500 5c0-2 1.500-3.500 4-3.500h23v28h-27z" fill="#fde7a6" stroke="#e0a41d" strokeWidth="1.400" />
      <path d="M4 24c6 2 12 0 17-5v10H4z" fill="#fff" opacity=".7" />
      <ellipse cx="11.500" cy="13" rx="5.500" ry="6.500" fill="#fff6da" stroke="#e8860c" strokeWidth="4" />
      <circle cx="26" cy="14" r="4.800" fill="#fff" stroke="#e8b45c" strokeWidth="1.500" />
      <path d="M26 11v3l2.500-1.500" fill="none" stroke="#c47c18" strokeWidth="1.200" />
      <path d="M18.500 20.500h14v11.500h-14z" fill="#fdf0c4" stroke="#b98a22" />
      <path d="M18.500 20.500l7 6 7-6M18.500 32l5-6M32.500 32l-5-6" fill="none" stroke="#b98a22" />
    </svg>
  );
}

function ContactsIcon() {
  return (
    <svg width="32" height="32" viewBox="0 0 32 32">
      <path d="M11 29c0-9 3-12 9-12s10 3 10 11c-5 2-13 3-19 1z" fill="#d8481f" stroke="#97300f" strokeWidth=".8" />
      <path d="M16 17l3 4 4-4z" fill="#f6b98c" />
      <circle cx="19" cy="9.500" r="7" fill="#f8c58a" stroke="#c78a46" strokeWidth=".6" />
      <path d="M12 8C11 2 16 .5 20 1c6 0 7.500 5 5.500 11C24 9 23 7 21 6c-3 1.500-6 1.500-9 2z" fill="#a5761c" />
      <g transform="rotate(-7 6 20)">
        <rect x="2.500" y="11" width="9" height="19" rx="2" fill="#4d5258" stroke="#24272b" />
        <path d="M3 12V8.500h2V12z" fill="#3a3d42" />
        <rect x="4" y="14" width="6" height="6" fill="#a9e37c" />
        <path d="M4.500 22.500h5M4.500 25h5M4.500 27.500h5" stroke="#c3c8ce" strokeDasharray="1 1" />
      </g>
    </svg>
  );
}

function GridAppIcon() {
  const cells = [
    ["#c4c4c4", "#c4c4c4", "#fff", "#7a0b7a"],
    ["#fff", "#6a1570", "#999", "#fff"],
    ["#1414e8", "#808080", "#c4c4c4", "#fff"],
    ["#fff", "#fff", "#c4c4c4", "#1414e8"],
  ];
  return (
    <svg width="33" height="33" viewBox="0 0 33 33" shapeRendering="crispEdges">
      <path d="M0 0h31v3h-2v4h-2v4H10v13H6v3H3v3H0z" fill="#35047a" />
      <path d="M0 20h10v4H6v3H3v3H0z" fill="#6b0a78" />
      <path d="M11 10h20v1h1v21H10V11h1z" fill="#111" />
      {cells.map((row, r) =>
        row.map((c, i) => <rect key={`${r}-${i}`} x={12 + i * 5} y={12 + r * 5} width="4" height="4" fill={c} />),
      )}
    </svg>
  );
}

const taskButton =
  "flex h-[39px] shrink-0 items-center justify-center rounded-[3px] border border-[#4f627c] bg-gradient-to-br from-[#cfdcec] via-[#b9cce3] to-[#a9c0dc]";

function Taskbar() {
  return (
    <footer className="flex h-10 items-start border-t border-[#39424f] bg-[#a7c1de]">
      <div className="flex h-full w-[120px] shrink-0 items-center bg-gradient-to-r from-[#8193aa] from-40% to-[#a7c1de] to-80% pl-2">
        <button type="button" aria-label="Start"><StartOrb /></button>
        <button type="button" aria-label="File explorer" className="ml-[26px]"><FolderIcon /></button>
      </div>
      <button type="button" aria-label="Firefox" className={taskButton + " ml-px w-[60px] "}><FirefoxIcon /></button>
      <button type="button" aria-label="Outlook" className="ml-0.5 flex">
        <span className="flex h-[39px] w-[52px] items-center justify-center rounded-[3px] border border-[#4f627c] bg-gradient-to-br from-white via-[#eaf0f7] to-[#d5e1ee]"><OutlookIcon /></span>
        <span className="h-[39px] w-1 rounded-r-[3px] border border-l-0 border-[#5f7490] bg-[#c7d7e9]" />
        <span className="h-[39px] w-1 rounded-r-[3px] border border-l-0 border-[#7f95b3] bg-[#b6cae1]" />
      </button>
      <button type="button" aria-label="Contacts" className={taskButton + " ml-0.5 w-[60px]"}><ContactsIcon /></button>
      <button type="button" aria-label="Grid application" className={taskButton + " ml-0.5 w-[60px]"}><GridAppIcon /></button>
      <div className="flex-1" />
      <div className="flex h-full items-center bg-gradient-to-r from-[#a7c1de] to-[#8193aa] to-20% pl-[46px]">
        <button type="button" aria-label="Show hidden icons" className="mr-2.5">
          <svg width="10" height="6" viewBox="0 0 10 6"><path d="M1 5.500L5 1l4 4.500z" fill="#fff" stroke="#55657c" strokeWidth=".6" /></svg>
        </button>
        <button type="button" aria-label="Network" className="mr-2">
          <svg width="17" height="17" viewBox="0 0 17 17">
            <rect x="4.500" y="3.500" width="11" height="9" fill="#6d7f97" stroke="#2d3642" strokeWidth="2.500" />
            <rect x="4.500" y="3.500" width="11" height="9" fill="#6d7f97" stroke="#fff" />
            <path d="M7 15.500h7M10.500 13v2" stroke="#fff" strokeWidth="1.300" />
            <path d="M1 1.500h5v4l-1.500 1.500v7.500H2.500V7L1 5.500z" fill="#fff" stroke="#2d3642" strokeWidth=".8" />
            <path d="M2.700 0v3M4.500 0v3" stroke="#2d3642" strokeWidth=".7" />
          </svg>
        </button>
        <button type="button" aria-label="Volume">
          <svg width="16" height="16" viewBox="0 0 16 16" fill="none">
            <path d="M.8 5.500h2.500L7 1.500v13L3.300 10.500H.8z" fill="#fff" stroke="#2d3642" strokeWidth=".8" />
            <path d="M9 6c1 1.200 1 2.800 0 4M11 4.500c2 2 2 5 0 7M13 3c3 3 3 7 0 10" stroke="#fff" strokeWidth="1.100" />
          </svg>
        </button>
        <time dateTime="2017-04-13T12:00" className="ml-4 mr-[11px] flex flex-col items-center text-[11px] leading-[17px] text-white">
          <span>12:00</span>
          <span>13/04/2017</span>
        </time>
        <button type="button" aria-label="Show desktop" className="h-full w-[15px] border border-[#39465a] bg-gradient-to-br from-[#8c9bb0] via-[#5c6b80] to-[#7d8fa8]" />
      </div>
    </footer>
  );
}

export default function App() {
  return (
    <div className="flex min-h-screen flex-col bg-[#e8ecf0] font-['Noto_Sans','Open_Sans',sans-serif]">
      <TitleBar />
      <TabStrip />
      <Ribbon />
      <MessageHeader />
      <Editor />
      <div className="h-[7px]" />
      <PeoplePane />
      <Taskbar />
    </div>
  );
}
